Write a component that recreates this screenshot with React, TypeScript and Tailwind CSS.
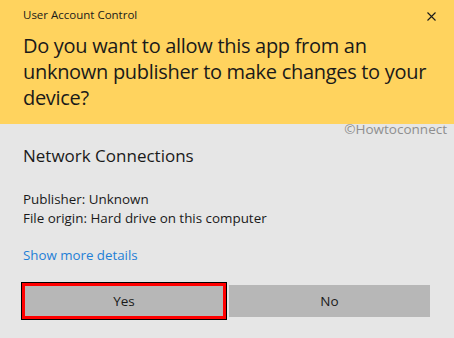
import React from 'react';

const CloseIcon: React.FC = () => (
  <svg width="9" height="9" viewBox="0 0 9 9" className="block">
    <path d="M0.5 0.5 L8.5 8.5 M8.5 0.5 L0.5 8.5" stroke="#1a1a1a" strokeWidth="1.1" fill="none" />
  </svg>
);

const App: React.FC = () => {
  return (
    <div
      className="relative w-[454px] h-[338px] overflow-hidden bg-[#e6e6e6] text-black"
      style={{ fontFamily: '"Open Sans", "Noto Sans", sans-serif' }}
    >
      {/* Yellow header */}
      <header className="h-[124px] bg-[#ffd35e] px-[23px] pt-[7px]">
        <div className="flex items-center justify-between">
          <span className="text-[11.5px] leading-[16px] text-[#1a1a1a]">User Account Control</span>
          <button className="mr-[-5px] mt-[2px] p-0">
            <CloseIcon />
          </button>
        </div>
        <h1 className="mt-[10px] w-[430px] whitespace-nowrap text-[20px] leading-[26px] font-normal tracking-[-0.3px] text-[#1a1a1a]">
          Do you want to allow this app from an
          <br />
          unknown publisher to make changes to your
          <br />
          device?
        </h1>
      </header>

      {/* Watermark */}
      <span className="absolute right-[7px] top-[121px] text-[13.5px] leading-[16px] text-[#8f8f8f]">
        ©Howtoconnect
      </span>

      {/* Body */}
      <main className="px-[23px]">
        <h2 className="mt-[21px] text-[17px] leading-[22px] font-normal text-[#1a1a1a]">Network Connections</h2>
        <div className="mt-[23px] text-[13.4px] leading-[19px] text-[#1a1a1a]">
          <p>Publisher: Unknown</p>
          <p>File origin: Hard drive on this computer</p>
        </div>
        <a className="mt-[18px] block text-[13.3px] leading-[19px] text-[#1f7fd6]">Show more details</a>
      </main>

      {/* Buttons */}
      <div className="mt-[17px] flex items-center pl-[21px]">
        <button className="h-[38px] w-[206px] border border-black p-0">
          <span className="flex h-full w-full items-center justify-center border-[3px] border-[#ff0000] bg-[#b7b7b7] text-[13.5px] text-[#1a1a1a]">
            Yes
          </span>
        </button>
        <button className="ml-[2px] flex h-[32px] w-[201px] items-center justify-center bg-[#b7b7b7] text-[13.5px] text-[#1a1a1a]">
          No
        </button>
      </div>
    </div>
  );
};

export default App;
